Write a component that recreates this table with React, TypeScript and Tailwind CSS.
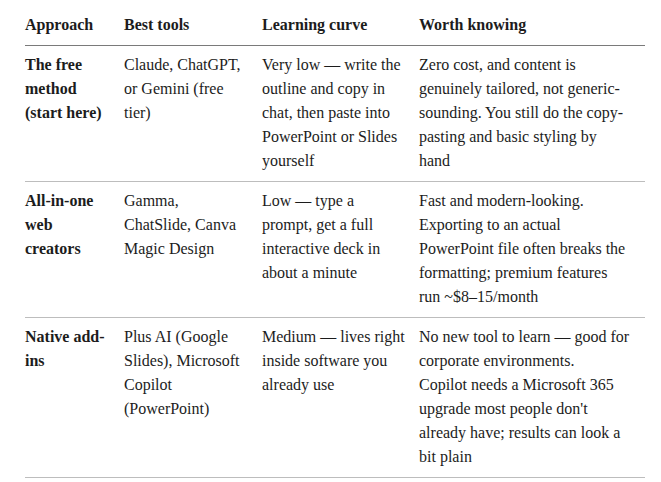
import React from 'react';

type Row = {
  approach: string[];
  tools: string[];
  curve: string[];
  notes: string[];
};

const rows: Row[] = [
  {
    approach: ['The free', 'method', '(start here)'],
    tools: ['Claude, ChatGPT,', 'or Gemini (free', 'tier)'],
    curve: ['Very low — write the', 'outline and copy in', 'chat, then paste into', 'PowerPoint or Slides', 'yourself'],
    notes: ['Zero cost, and content is', 'genuinely tailored, not generic-', 'sounding. You still do the copy-', 'pasting and basic styling by', 'hand'],
  },
  {
    approach: ['All-in-one', 'web', 'creators'],
    tools: ['Gamma,', 'ChatSlide, Canva', 'Magic Design'],
    curve: ['Low — type a', 'prompt, get a full', 'interactive deck in', 'about a minute'],
    notes: ['Fast and modern-looking.', 'Exporting to an actual', 'PowerPoint file often breaks the', 'formatting; premium features', 'run ~$8–15/month'],
  },
  {
    approach: ['Native add-', 'ins'],
    tools: ['Plus AI (Google', 'Slides), Microsoft', 'Copilot', '(PowerPoint)'],
    curve: ['Medium — lives right', 'inside software you', 'already use'],
    notes: ['No new tool to learn — good for', 'corporate environments.', 'Copilot needs a Microsoft 365', "upgrade most people don't", 'already have; results can look a', 'bit plain'],
  },
];

const cols = 'grid grid-cols-[99px_138px_157px_226px]';

const Lines: React.FC<{ lines: string[]; className?: string }> = ({ lines, className }) => (
  <div className={className}>
    {lines.map((l, i) => (
      <div key={i} className="whitespace-nowrap">{l}</div>
    ))}
  </div>
);

const App: React.FC = () => {
  return (
    <div className="min-h-screen bg-white px-[25px] pt-[5px] text-[16px] leading-[24px] text-[#1c1c1c] [font-family:'Liberation_Serif',serif]">
      <div className="w-[620px]">
        <div className={`${cols} border-b border-[#7a7a7a] py-2 font-bold`}>
          <div>Approach</div>
          <div>Best tools</div>
          <div>Learning curve</div>
          <div>Worth knowing</div>
        </div>
        {rows.map((r) => (
          <div key={r.approach[0]} className={`${cols} border-b border-[#bdbdbd] pt-[7px] pb-2`}>
            <Lines lines={r.approach} className="font-bold" />
            <Lines lines={r.tools} />
            <Lines lines={r.curve} />
            <Lines lines={r.notes} />
          </div>
        ))}
      </div>
    </div>
  );
};

export default App;
